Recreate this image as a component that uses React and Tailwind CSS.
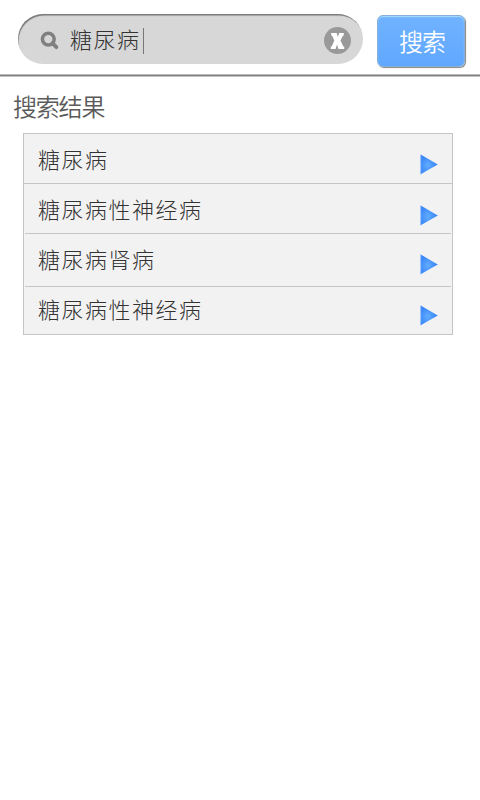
import React from 'react';

const results = [
  { name: '糖尿病', row: 'h-[50px] border-t border-[#c5c5c5]', inner: 'px-[14px]', label: 'pt-[8px]', arrow: 'mt-[20px]' },
  { name: '糖尿病性神经病', row: 'h-[50px]', inner: 'px-[14px] border-t border-[#c5c5c5]', label: 'pt-[8px]', arrow: 'mt-[21px]' },
  { name: '糖尿病肾病', row: 'h-[53px]', inner: 'mx-px px-[13px] border-t border-[#c5c5c5]', label: 'pt-[8px]', arrow: 'mt-[20px]' },
  { name: '糖尿病性神经病', row: 'h-[48px]', inner: 'mx-px px-[13px] border-t border-[#c5c5c5]', label: 'pt-[5px]', arrow: 'mt-[18px]' },
];

function Arrow({ className }) {
  return (
    <svg className={className} width="18" height="21" viewBox="0 0 18 21">
      <defs>
        <radialGradient id="arrowFill" cx="0.42" cy="0.55" r="0.5">
          <stop offset="0" stopColor="#62adff" />
          <stop offset="1" stopColor="#3986f8" />
        </radialGradient>
      </defs>
      <path d="M0.7 0.5 L17.8 10.4 L0.7 20.3 Z" fill="url(#arrowFill)" />
      <path d="M0.7 0.5 V20.3" stroke="#8fbcff" strokeWidth="0.8" />
    </svg>
  );
}

export default function App() {
  return (
    <div className="h-[800px] w-[480px] overflow-hidden bg-white font-['Noto_Sans_CJK_SC',sans-serif] font-[350]">
      <header className="flex h-[77px] items-start border-b border-[#c4c4c4] pl-[18px] pt-[14px] shadow-[inset_0_-1px_0_#808080,inset_0_-2px_0_#bbb]">
        <div className="flex h-[50px] w-[345px] items-center rounded-full bg-[#d7d7d7] pl-[22px] pr-[12px] shadow-[inset_1px_2px_1px_-0.5px_#777]">
          <svg width="20" height="20" viewBox="0 0 20 20" fill="none" stroke="#808080" className="mt-[3px]">
            <circle cx="8.3" cy="8.1" r="5.9" strokeWidth="3.5" />
            <path d="M12.6 12.3 L16.4 16.2" strokeWidth="3.8" strokeLinecap="round" />
          </svg>
          <span className="-mt-[2px] ml-[10px] whitespace-nowrap text-[22px] font-light leading-[32px] tracking-[1.5px] text-[#333]">糖尿病</span>
          <span className="ml-[2px] mt-[4px] h-[26px] w-px bg-[#777]" />
          <svg width="27" height="27" viewBox="0 0 27 27" className="ml-auto mt-[3px]">
            <circle cx="13.5" cy="13.5" r="13.5" fill="#999" />
            <path d="M7.2 6h5.4l1.3 4 1.3-4h4.6v2.4h-.8l-2.5 5.2 2.8 5.8h.9V22h-5.8l-1.4-4.6L11.6 22H6.8v-2.6h.9l2.6-5.8-2.3-5.2h-.8Z" fill="#fff" />
          </svg>
        </div>
        <button className="ml-[14px] mt-px flex h-[52px] w-[88px] items-center justify-center rounded-[6px] border border-[#86aed8] bg-linear-to-b from-[#70b2ff] to-[#60a8ff] pl-[2px] text-[24px] leading-none tracking-[-1px] text-white shadow-[inset_0_1px_1px_#a8deff,1px_1px_1px_#888]"><span>搜索</span></button>
      </header>
      <h1 className="ml-[13px] mt-[12px] h-[34px] text-[24px] font-[350] leading-[34px] tracking-[-1.2px] text-[#5a5a5a]">搜索结果</h1>
      <ul className="ml-[23px] mt-[10px] w-[430px] border-x border-b border-[#c5c5c5] bg-[#f2f2f2]">
        {results.map((item, i) => (
          <li key={i} className={item.row}>
            <div className={`flex h-full items-start justify-between ${item.inner}`}>
              <span className={`whitespace-nowrap text-[22px] font-light leading-[32px] tracking-[1.5px] text-[#333] ${item.label}`}>{item.name}</span>
              <Arrow className={item.arrow} />
            </div>
          </li>
        ))}
      </ul>
    </div>
  );
}
